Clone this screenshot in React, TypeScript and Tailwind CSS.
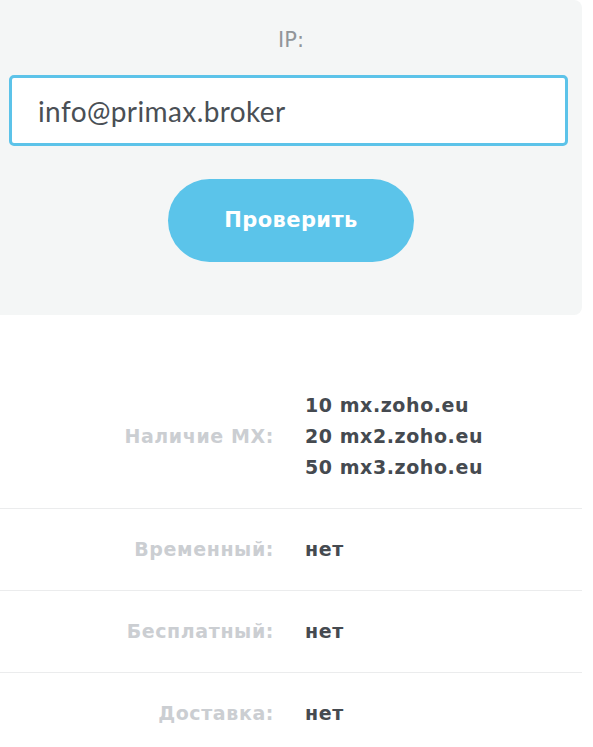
import React from 'react';

const rows = [
    { label: 'Наличие MX:', values: [['10', 'mx.zoho.eu'], ['20', 'mx2.zoho.eu'], ['50', 'mx3.zoho.eu']] },
    { label: 'Временный:', values: [['', 'нет']] },
    { label: 'Бесплатный:', values: [['', 'нет']] },
    { label: 'Доставка:', values: [['', 'нет']] },
];

export default function App() {
    return (
        <div className="min-h-screen bg-white" style={{ fontFamily: '"DejaVu Sans", sans-serif' }}>
            {/* check form */}
            <div className="w-[582px] bg-[#f4f6f6] rounded-r-lg pt-[28px] pb-[53px]">
                <div className="text-center text-[21px] leading-6 text-[#919599]">IP:</div>
                <div className="ml-[9px] mt-[23px] w-[559px] h-[71px] bg-white border-[3px] border-[#5cc3e9] rounded-[5px] flex items-center pl-[26px]">
                    <span className="text-[28px] tracking-[0.4px] text-[#4a4f55]" style={{ fontFamily: 'Lato, sans-serif' }}>info@primax.broker</span>
                </div>
                <div className="flex justify-center mt-[33px]">
                    <button className="w-[246px] h-[83px] rounded-full bg-[#5bc4ea] text-white text-[21px] tracking-[0.4px] font-bold">
                        Проверить
                    </button>
                </div>
            </div>

            {/* results */}
            <div className="w-[582px] mt-[50px]">
                {rows.map((row) => (
                    <div key={row.label} className="flex items-center border-b border-[#ebeced] py-[25px]">
                        <div className="w-[274px] text-right text-[19px] tracking-[0.6px] font-bold text-[#cbced2] leading-[31px]">{row.label}</div>
                        <div className="ml-[31px] text-[19px] tracking-[0.6px] font-bold text-[#454a50] leading-[31px]">
                            {row.values.map(([n, v]) => (
                                <div key={v + n}>
                                    {n && <span className="mr-[7px]">{n}</span>}
                                    {v}
                                </div>
                            ))}
                        </div>
                    </div>
                ))}
            </div>
        </div>
    );
}
